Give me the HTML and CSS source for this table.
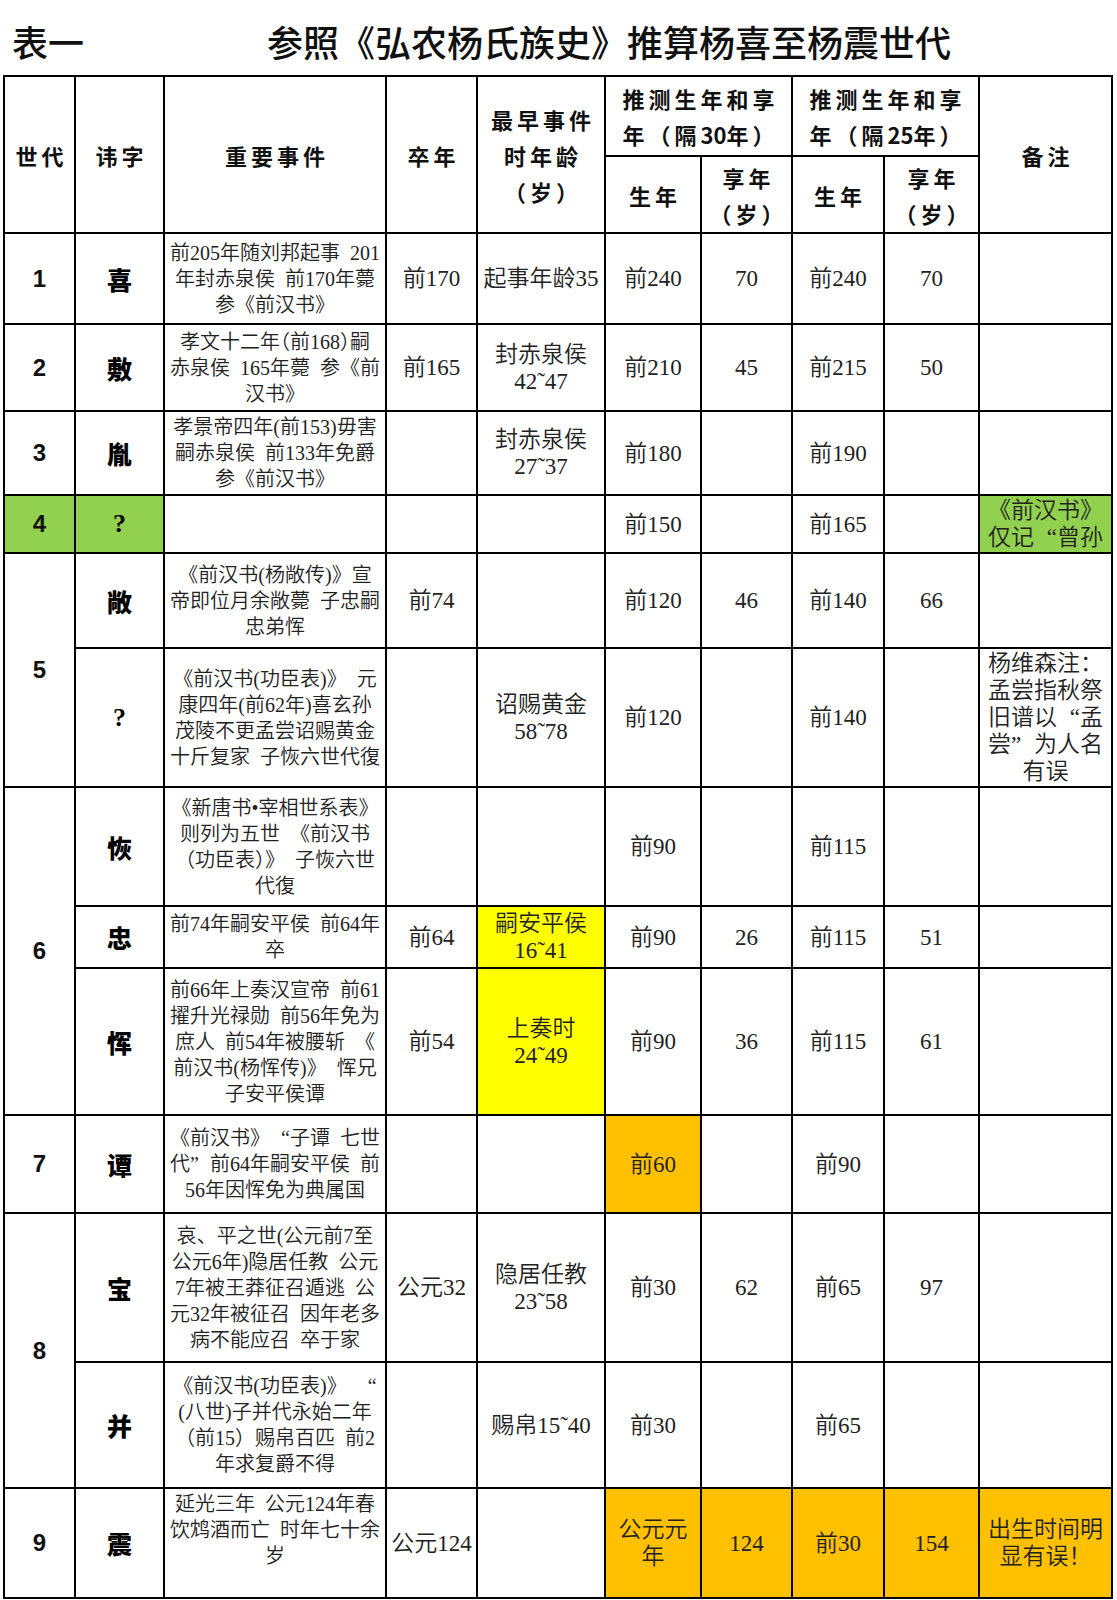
FILE: index.html
```html
<!DOCTYPE html>
<html lang="zh-CN">
<head>
<meta charset="utf-8">
<title>表一</title>
<link rel="stylesheet" href="styles.css">
</head>
<body>
<div class="title"><span class="t1">表一</span><span class="t2">参照《弘农杨氏族史》推算杨喜至杨震世代</span></div>
<table class="tbl">
<colgroup>
<col class="c1"><col class="c2"><col class="c3"><col class="c4"><col class="c5"><col class="c6"><col class="c7"><col class="c8"><col class="c9"><col class="c10">
</colgroup>
<thead>
<tr class="h1">
<th rowspan="2">世代</th>
<th rowspan="2">讳字</th>
<th rowspan="2">重要事件</th>
<th rowspan="2">卒年</th>
<th rowspan="2">最早事件<br>时年龄<br><span class="hw">（</span>岁<span class="hw">）</span></th>
<th colspan="2">推测生年和享<br>年（隔<span class="nd">30</span>年）</th>
<th colspan="2">推测生年和享<br>年（隔<span class="nd">25</span>年）</th>
<th rowspan="2">备注</th>
</tr>
<tr class="h2">
<th>生年</th>
<th>享年<br><span class="hw">（</span>岁<span class="hw">）</span></th>
<th>生年</th>
<th>享年<br><span class="hw">（</span>岁<span class="hw">）</span></th>
</tr>
</thead>
<tbody>
<tr class="r1">
<td class="gen">1</td><td class="nm">喜</td>
<td class="ev">前205年随刘邦起事 201<br>年封赤泉侯 前170年薨<br>参《前汉书》</td>
<td class="num">前170</td><td class="num">起事年龄35</td>
<td class="num">前240</td><td class="num">70</td><td class="num">前240</td><td class="num">70</td><td class="note"></td>
</tr>
<tr class="r2">
<td class="gen">2</td><td class="nm">敷</td>
<td class="ev">孝文十二年<span class="hw">（</span>前168<span class="hw">）</span>嗣<br>赤泉侯 165年薨 参《前<br>汉书》</td>
<td class="num">前165</td><td class="num">封赤泉侯<br>42˜47</td>
<td class="num">前210</td><td class="num">45</td><td class="num">前215</td><td class="num">50</td><td class="note"></td>
</tr>
<tr class="r3">
<td class="gen">3</td><td class="nm">胤</td>
<td class="ev">孝景帝四年(前153)毋害<br>嗣赤泉侯 前133年免爵<br>参《前汉书》</td>
<td class="num"></td><td class="num">封赤泉侯<br>27˜37</td>
<td class="num">前180</td><td class="num"></td><td class="num">前190</td><td class="num"></td><td class="note"></td>
</tr>
<tr class="r4">
<td class="gen green">4</td><td class="nm q green">?</td>
<td class="ev"></td>
<td class="num"></td><td class="num"></td>
<td class="num">前150</td><td class="num"></td><td class="num">前165</td><td class="num"></td>
<td class="note green clip"><div>《前汉书》</div><div class="lft">仅记<span class="ql">“</span>曾孙</div></td>
</tr>
<tr class="r5a">
<td class="gen" rowspan="2">5</td><td class="nm">敞</td>
<td class="ev">《前汉书(杨敞传)》宣<br>帝即位月余敞薨 子忠嗣<br>忠弟恽</td>
<td class="num">前74</td><td class="num"></td>
<td class="num">前120</td><td class="num">46</td><td class="num">前140</td><td class="num">66</td><td class="note"></td>
</tr>
<tr class="r5b">
<td class="nm q">?</td>
<td class="ev">《前汉书(功臣表)》 元<br>康四年(前62年)喜玄孙<br>茂陵不更孟尝诏赐黄金<br>十斤复家 子恢六世代復</td>
<td class="num"></td><td class="num">诏赐黄金<br>58˜78</td>
<td class="num">前120</td><td class="num"></td><td class="num">前140</td><td class="num"></td>
<td class="note">杨维森注：<br>孟尝指秋祭<br>旧谱以<span class="ql">“</span>孟<br>尝<span class="qr">”</span>为人名<br>有误</td>
</tr>
<tr class="r6a">
<td class="gen" rowspan="3">6</td><td class="nm">恢</td>
<td class="ev">《新唐书•宰相世系表》<br>则列为五世 《前汉书<br>（功臣表）》 子恢六世<br>代復</td>
<td class="num"></td><td class="num"></td>
<td class="num">前90</td><td class="num"></td><td class="num">前115</td><td class="num"></td><td class="note"></td>
</tr>
<tr class="r6b">
<td class="nm">忠</td>
<td class="ev">前74年嗣安平侯 前64年<br>卒</td>
<td class="num">前64</td><td class="num yellow">嗣安平侯<br>16˜41</td>
<td class="num">前90</td><td class="num">26</td><td class="num">前115</td><td class="num">51</td><td class="note"></td>
</tr>
<tr class="r6c">
<td class="nm">恽</td>
<td class="ev">前66年上奏汉宣帝 前61<br>擢升光禄勋 前56年免为<br>庶人 前54年被腰斩 《<br>前汉书(杨恽传)》 恽兄<br>子安平侯谭</td>
<td class="num">前54</td><td class="num yellow">上奏时<br>24˜49</td>
<td class="num">前90</td><td class="num">36</td><td class="num">前115</td><td class="num">61</td><td class="note"></td>
</tr>
<tr class="r7">
<td class="gen">7</td><td class="nm">谭</td>
<td class="ev">《前汉书》<span class="ql">“</span>子谭 七世<br>代<span class="qr">”</span>前64年嗣安平侯 前<br>56年因恽免为典属国</td>
<td class="num"></td><td class="num"></td>
<td class="num orange">前60</td><td class="num"></td><td class="num">前90</td><td class="num"></td><td class="note"></td>
</tr>
<tr class="r8a">
<td class="gen" rowspan="2">8</td><td class="nm">宝</td>
<td class="ev">哀、平之世(公元前7至<br>公元6年)隐居任教 公元<br>7年被王莽征召遁逃 公<br>元32年被征召 因年老多<br>病不能应召 卒于家</td>
<td class="num">公元32</td><td class="num">隐居任教<br>23˜58</td>
<td class="num">前30</td><td class="num">62</td><td class="num">前65</td><td class="num">97</td><td class="note"></td>
</tr>
<tr class="r8b">
<td class="nm">并</td>
<td class="ev">《前汉书(功臣表)》 <span class="ql">“</span><br>(八世)子并代永始二年<br>（前15）赐帛百匹 前2<br>年求复爵不得</td>
<td class="num"></td><td class="num">赐帛15˜40</td>
<td class="num">前30</td><td class="num"></td><td class="num">前65</td><td class="num"></td><td class="note"></td>
</tr>
<tr class="r9">
<td class="gen">9</td><td class="nm">震</td>
<td class="ev">延光三年 公元124年春<br>饮鸩酒而亡 时年七十余<br>岁<br>&nbsp;</td>
<td class="num">公元124</td><td class="num"></td>
<td class="num orange">公元元<br>年</td><td class="num orange">124</td><td class="num orange">前30</td><td class="num orange">154</td>
<td class="note orange">出生时间明<br>显有误！</td>
</tr>
</tbody>
</table>
</body>
</html>
```
FILE: styles.css
```css
html, body {
  margin: 0;
  padding: 0;
  background: #fff;
}
body {
  font-family: "Liberation Serif", "Noto Sans CJK SC", serif;
  color: #333;
  width: 1117px;
}
.title {
  display: flex;
  padding: 23px 0 0 12px;
  height: 36px;
  font-family: "Noto Sans CJK SC", sans-serif;
  font-size: 36px;
  line-height: 36px;
  font-weight: 500;
  color: #111;
}
.title .t2 {
  margin-left: 183px;
}
.tbl {
  border-collapse: collapse;
  table-layout: fixed;
  width: 1108px;
  margin: 16px 0 0 3px;
}
.c1 { width: 71px; }
.c2 { width: 89px; }
.c3 { width: 222px; }
.c4 { width: 91px; }
.c5 { width: 128px; }
.c6 { width: 96px; }
.c7 { width: 91px; }
.c8 { width: 92px; }
.c9 { width: 95px; }
.c10 { width: 133px; }
.tbl th,
.tbl td {
  border: 2px solid #000;
  padding: 0;
  text-align: center;
  vertical-align: middle;
  white-space: nowrap;
}
.tbl th {
  font-family: "Noto Sans CJK SC", sans-serif;
  font-weight: 700;
  font-size: 22px;
  line-height: 36px;
  letter-spacing: 4px;
  padding-left: 4px;
  color: #111;
}
.nd {
  letter-spacing: 0;
}
.hw {
  font-feature-settings: "halt";
}
.h1 { height: 80px; }
.h2 { height: 77px; }
.r1 { height: 91px; }
.r2 { height: 87px; }
.r3 { height: 84px; }
.r4 { height: 58px; }
.r5a { height: 95px; }
.r5b { height: 139px; }
.r6a { height: 119px; }
.r6b { height: 62px; }
.r6c { height: 147px; }
.r7 { height: 98px; }
.r8a { height: 149px; }
.r8b { height: 126px; }
.r9 { height: 110px; }
.gen {
  font-family: "Liberation Sans", sans-serif;
  font-weight: 700;
  font-size: 24px;
  color: #111;
}
.nm {
  font-family: "Noto Sans CJK SC", sans-serif;
  font-weight: 900;
  font-size: 25px;
  color: #000;
}
.nm.q {
  font-family: "Liberation Serif", serif;
  font-weight: 700;
  font-size: 26px;
}
.ev {
  font-size: 20px;
  line-height: 26px;
  font-weight: 350;
  word-spacing: 5px;
  color: #222;
}
.num {
  font-size: 23px;
  line-height: 27px;
  font-weight: 350;
  color: #222;
}
.note {
  font-size: 23px;
  line-height: 27px;
  font-weight: 350;
  color: #222;
}
.clip {
  overflow: hidden;
}
.lft {
  text-align: left;
  padding-left: 8px;
}
.ql,
.qr {
  display: inline-block;
  width: 1em;
  word-spacing: 0;
}
.ql { text-align: right; }
.qr { text-align: left; }
.green { background: #92d050; }
.yellow { background: #ffff00; }
.orange { background: #ffc000; }
```
